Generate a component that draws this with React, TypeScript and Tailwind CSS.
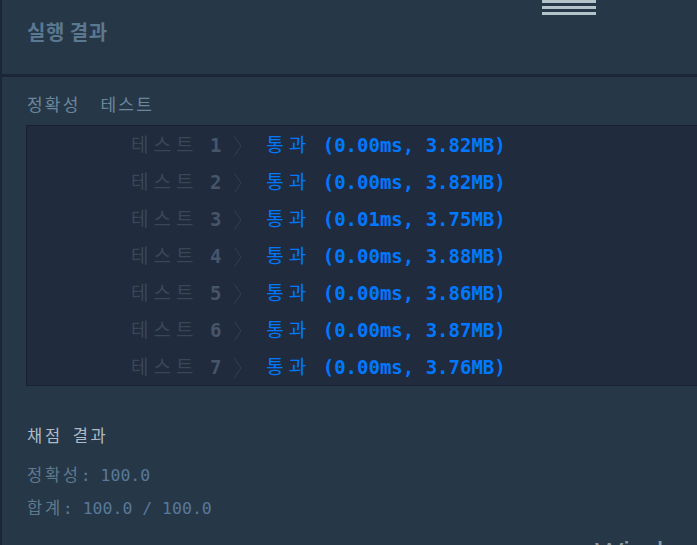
const results = [
  { n: 1, time: "0.00ms", mem: "3.82MB" },
  { n: 2, time: "0.00ms", mem: "3.82MB" },
  { n: 3, time: "0.01ms", mem: "3.75MB" },
  { n: 4, time: "0.00ms", mem: "3.88MB" },
  { n: 5, time: "0.00ms", mem: "3.86MB" },
  { n: 6, time: "0.00ms", mem: "3.87MB" },
  { n: 7, time: "0.00ms", mem: "3.76MB" },
];

const mono = "font-['DejaVu_Sans_Mono','Noto_Sans_CJK_KR',monospace]";
const kr = "font-['Noto_Sans_CJK_KR','Noto_Sans',sans-serif]";

const Chevron = () => (
  <svg
    width="22"
    height="20"
    viewBox="0 0 22 20"
    className="inline-block align-[-4px]"
    fill="none"
    stroke="#344153"
    strokeWidth="1"
  >
    <polyline points="1.5,0.5 8,10 1.5,19.5" />
  </svg>
);

export default function App() {
  return (
    <div className="relative h-[545px] w-[697px] overflow-hidden border-l-2 border-[#1b2636] bg-[#263747]">
      <div className="flex h-[77px] items-center border-b-[3px] border-[#1b2636] pb-[10px] pl-[25px]">
        <h2 className={`${kr} text-[20px] font-bold tracking-[0.5px] text-[#5b7891]`}>실행 결과</h2>
      </div>

      {/* window drag handle */}
      <div className="absolute left-[540px] top-0 flex w-[54px] flex-col gap-[3px]">
        <div className="h-[3px] bg-[#b4c2ca]" />
        <div className="h-[3px] bg-[#b4c2ca]" />
        <div className="h-[3px] bg-[#b4c2ca]" />
      </div>

      <div className={`${kr} mt-[15px] flex gap-[20px] pl-[25px] text-[17px] leading-[24px] text-[#6b879e]`}>
        <span className="tracking-[2.2px]">정확성</span>
        <span className="tracking-[2.2px]">테스트</span>
      </div>

      <div className="ml-[24px] mt-[9px] border border-r-0 border-[#172130] bg-[#202b3d]">
        {results.map((r) => (
          <div key={r.n} className="h-[37px] whitespace-pre pl-[104px] text-[19px] leading-[35px]">
            <span className={`${kr} tracking-[5px] text-[#3a4758]`}>테스트</span>
            <span className={`${mono} font-bold text-[#46556a]`}> {r.n} </span>
            <Chevron />
            <span className={mono}> </span>
            <span className={`${kr} tracking-[5px] text-[#0078ff]`}>통과</span>
            <span className={`${mono} font-bold text-[#0078ff]`}>
              {" "}({r.time}, {r.mem})
            </span>
          </div>
        ))}
      </div>

      <div className={`${mono} mt-[39px] pl-[25px] text-[16.5px]`}>
        <div className="leading-[24px] text-[#aebbc7]">
          <span className="tracking-[2.7px]">채점</span> <span className="tracking-[2.7px]">결과</span>
        </div>
        <div className="mt-[10px] leading-[33px] text-[#5f7a8f]">
          <span className="tracking-[2.7px]">정확성</span>: <span className="text-[#58799a]">100.0</span>
        </div>
        <div className="leading-[33px] text-[#5f7a8f]">
          <span className="tracking-[2.7px]">합계</span>: <span className="text-[#58799a]">100.0 / 100.0</span>
        </div>
      </div>

      {/* activation watermark, cut off by the window edge */}
      <div className="absolute left-[593px] top-[538px] whitespace-nowrap font-['Liberation_Sans',sans-serif] text-[30px] leading-none text-[#8e99a2]">
        Windows 정품 인증
      </div>
    </div>
  );
}
